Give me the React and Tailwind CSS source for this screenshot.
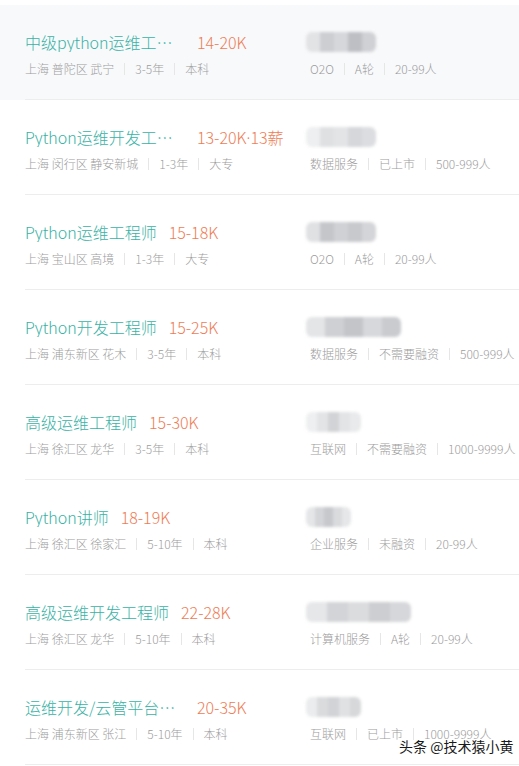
import React from "react";

const jobs = [
  { t: "中级python运维工程师", s: "14-20K", m: ["上海 普陀区 武宁", "3-5年", "本科"], c: ["O2O", "A轮", "20-99人"], blur: [70, 0], hover: true },
  { t: "Python运维开发工程师", s: "13-20K", s2: "13薪", m: ["上海 闵行区 静安新城", "1-3年", "大专"], c: ["数据服务", "已上市", "500-999人"], blur: [70, 1] },
  { t: "Python运维工程师", s: "15-18K", m: ["上海 宝山区 高境", "1-3年", "大专"], c: ["O2O", "A轮", "20-99人"], blur: [70, 2] },
  { t: "Python开发工程师", s: "15-25K", m: ["上海 浦东新区 花木", "3-5年", "本科"], c: ["数据服务", "不需要融资", "500-999人"], blur: [95, 3] },
  { t: "高级运维工程师", s: "15-30K", m: ["上海 徐汇区 龙华", "3-5年", "本科"], c: ["互联网", "不需要融资", "1000-9999人"], blur: [55, 4] },
  { t: "Python讲师", s: "18-19K", m: ["上海 徐汇区 徐家汇", "5-10年", "本科"], c: ["企业服务", "未融资", "20-99人"], blur: [45, 5] },
  { t: "高级运维开发工程师", s: "22-28K", m: ["上海 徐汇区 龙华", "5-10年", "本科"], c: ["计算机服务", "A轮", "20-99人"], blur: [105, 6] },
  { t: "运维开发/云管平台工程师", s: "20-35K", m: ["上海 浦东新区 张江", "5-10年", "本科"], c: ["互联网", "已上市", "1000-9999人"], blur: [55, 7] },
];

const palettes = [
  ["#e2e3e5", "#ccced2", "#d6d7da", "#bdbfc4", "#d0d1d4"],
  ["#eeeff0", "#dfe0e2", "#e3e4e6", "#d6d7da", "#dcdde0"],
  ["#e0e1e3", "#c4c6ca", "#d0d1d4", "#c8c9cd", "#d4d5d8"],
  ["#e4e5e7", "#cfd0d3", "#c3c5c9", "#d7d8db", "#cacbcf"],
  ["#eeeff0", "#e3e4e6", "#d2d3d6", "#e3e4e6", "#e9eaeb"],
  ["#e5e6e8", "#d4d5d8", "#c6c8cc", "#dadbdd", "#e6e7e9"],
  ["#e6e7e9", "#d3d4d7", "#dbdcde", "#cdced1", "#d6d7da"],
  ["#ebeced", "#dadbdd", "#d2d3d6", "#e0e1e3", "#d7d8da"],
];

function Sep() {
  return <span className="inline-block w-px h-3 bg-[#e6e6e6] mx-[10px] align-middle" />;
}

function Meta({ items }) {
  return (
    <div className="flex items-center whitespace-nowrap text-[12px] leading-4 text-[#9c9c9c] font-light">
      {items.map((x, i) => (
        <React.Fragment key={i}>
          {i > 0 && <Sep />}
          <span>{x}</span>
        </React.Fragment>
      ))}
    </div>
  );
}

function Blur({ w, idx }) {
  const p = palettes[idx];
  return (
    <div className="h-5 flex rounded-[6px] overflow-hidden blur-[1.5px] -ml-[4px]" style={{ width: w }}>
      {p.map((c, i) => (
        <div key={i} className="flex-1 h-full" style={{ background: c }} />
      ))}
    </div>
  );
}

export default function App() {
  return (
    <div className="relative w-[519px] h-[766px] overflow-hidden bg-white pt-[5px]" style={{ fontFamily: '"Noto Sans CJK SC", "Noto Sans", sans-serif' }}>
      {jobs.map((j, i) => (
        <div key={i} className={j.hover ? "bg-[#f8f9fb]" : ""}>
          <div className="ml-[25px] border-b border-[#ededed] pt-[27px] pb-[22px] grid grid-cols-[285px_1fr] overflow-hidden">
            <div className="flex items-center h-5 whitespace-nowrap font-light">
              <span className="max-w-[160px] truncate text-[16px] leading-5 text-[#38b2a5]">{j.t}</span>
              <span className="ml-3 text-[16px] leading-5 text-[#ee7c55]">
                {j.s}
                {j.s2 && (
                  <>
                    <span style={{ fontFamily: '"Noto Sans", sans-serif' }}>·</span>
                    {j.s2}
                  </>
                )}
              </span>
            </div>
            <div className="h-5 flex items-center">
              <Blur w={j.blur[0]} idx={j.blur[1]} />
            </div>
            <div className="mt-[9px]">
              <Meta items={j.m} />
            </div>
            <div className="mt-[9px]">
              <Meta items={j.c} />
            </div>
          </div>
        </div>
      ))}
      <div className="absolute left-[399px] top-[736px] text-[14px] leading-5 text-[#1a1a1a] whitespace-nowrap" style={{ textShadow: "0 0 2px #fff, 0 0 2px #fff" }}>
        头条 @技术猿小黄
      </div>
    </div>
  );
}
